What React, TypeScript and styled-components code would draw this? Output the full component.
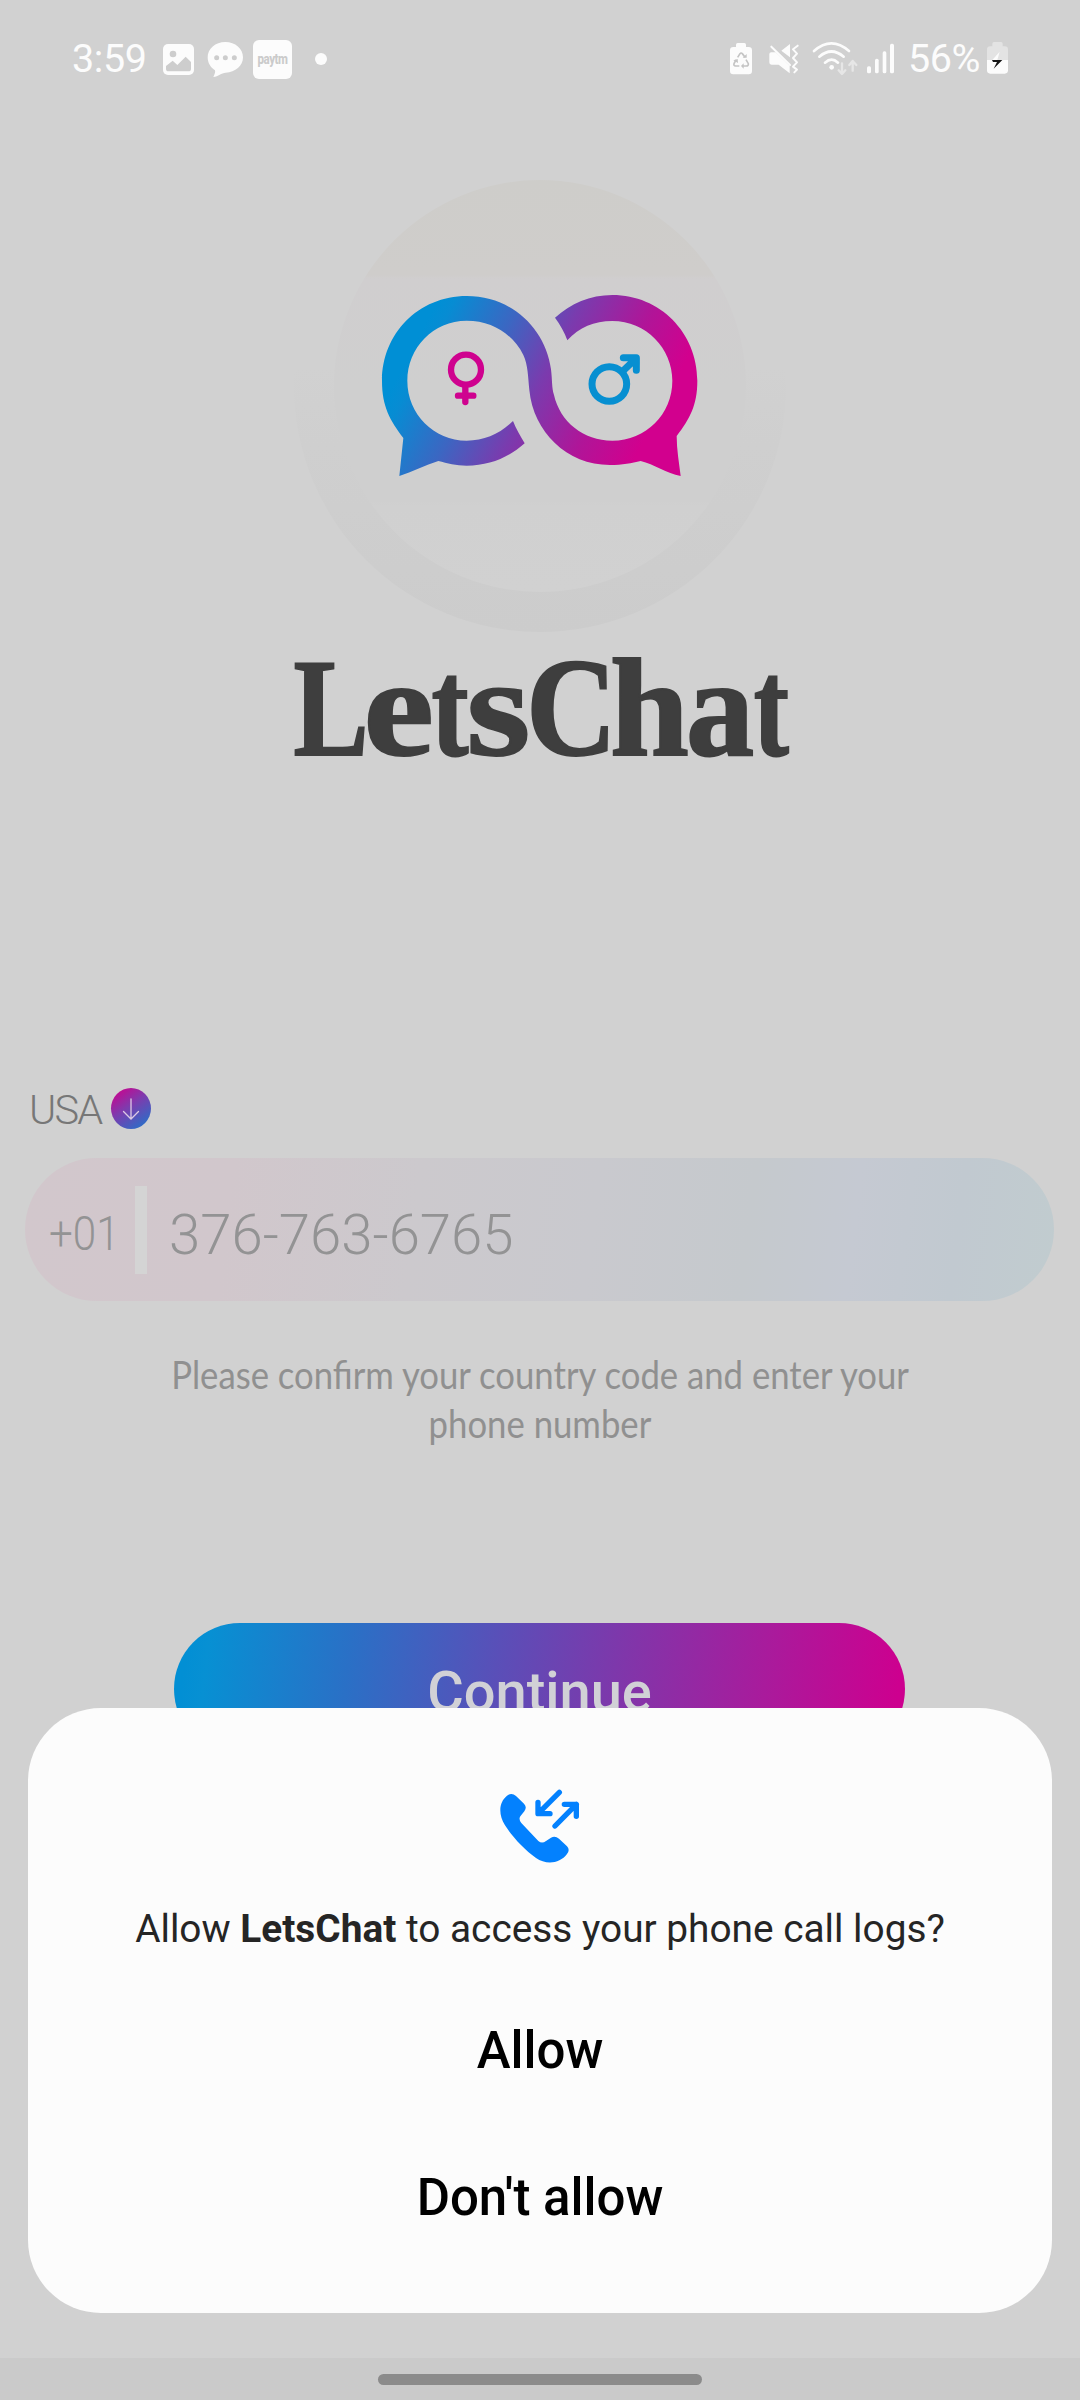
import React from "react";
import styled, { createGlobalStyle } from "styled-components";

const GlobalStyle = createGlobalStyle`
  * { box-sizing: border-box; }
  body { margin: 0; background: #d1d1d1; }
`;

const Screen = styled.div`
  position: relative;
  width: 1080px;
  height: 2400px;
  overflow: hidden;
  background: #d1d1d1;
  font-family: Roboto, "Liberation Sans", sans-serif;
  display: flex;
  flex-direction: column;
`;

const StatusBar = styled.header`
  height: 80px;
  margin-top: 20px;
  padding: 0 72px;
  display: flex;
  justify-content: space-between;
  flex: none;
`;

const StatusGroup = styled.div`
  display: flex;
  align-items: center;
  height: 80px;
`;

const StatusText = styled.span<{ $width: number; $before?: number }>`
  width: ${(p) => p.$width}px;
  margin-left: ${(p) => p.$before ?? 0}px;
  padding-bottom: 3px;
  font-size: 39.5px;
  line-height: 46px;
  letter-spacing: -0.4px;
  white-space: nowrap;
  color: #fcfcfc;
`;

const StatusIcon = styled.svg<{ $before?: number }>`
  height: 80px;
  flex: none;
  margin-left: ${(p) => p.$before ?? 0}px;
`;

const PaytmBadge = styled.span`
  width: 39px;
  height: 39px;
  margin: 0 23px 2px 9px;
  border-radius: 6px;
  background: #fcfcfc;
  color: #cbcbcb;
  display: flex;
  align-items: center;
  justify-content: center;
  font-size: 11.5px;
  font-weight: 800;
  letter-spacing: -0.5px;
`;

const PaytmLabel = styled.span`
  transform: scaleY(1.2);
`;

const Dot = styled.span`
  width: 12px;
  height: 12px;
  margin-bottom: 2px;
  border-radius: 50%;
  background: #fcfcfc;
`;

const Brand = styled.section`
  display: flex;
  flex-direction: column;
  align-items: center;
  height: 970px;
  padding-top: 40px;
`;

const Halo = styled.div`
  width: 492px;
  height: 492px;
  border-radius: 50%;
  background: linear-gradient(#d1d1d1 46%, #cfcfcf 62%, #cccccc);
  display: flex;
  align-items: center;
  justify-content: center;
`;

const Disc = styled.div`
  width: 412px;
  height: 412px;
  border-radius: 50%;
  background: linear-gradient(#cecdca 0, #cfcdcb 23%, #d0cecf 24%, #cfcfcf 50%, #cfcfcf 78%, #d0d0d0 79%, #d1d1d1);
  display: flex;
  justify-content: center;
  padding-top: 100px;
`;

const Wordmark = styled.h1`
  margin: 6px 0 0 4px;
  display: flex;
  width: 493px;
  height: 140px;
  font-family: "Liberation Serif", serif;
  font-size: 139px;
  font-weight: 700;
  line-height: 140px;
  color: #3e3e3e;
  -webkit-text-stroke: 2px #3e3e3e;
`;

const Glyph = styled.span<{ $slot: number; $stretch: number }>`
  flex: none;
  width: ${(p) => p.$slot}px;
  text-indent: -3px;
  transform: scaleX(${(p) => p.$stretch});
  transform-origin: left;
`;

const Form = styled.main`
  display: flex;
  flex-direction: column;
  padding: 0 26px 0 25px;
`;

const CountryRow = styled.div`
  height: 88px;
  padding: 15px 0 0 4px;
  display: flex;
  align-items: flex-start;
`;

const Country = styled.span`
  width: 82px;
  padding-top: 1px;
  font-size: 41.5px;
  font-weight: 300;
  line-height: 48px;
  letter-spacing: -1.8px;
  color: #777777;
`;

const CountryToggle = styled.span`
  width: 40px;
  height: 41px;
  margin-top: 3px;
  border-radius: 50%;
  background: linear-gradient(145deg, #c8058f 8%, #7d3cae 45%, #2074cb 95%);
  display: flex;
  justify-content: center;
  align-items: center;
`;

const PhoneField = styled.div`
  height: 143px;
  border-radius: 72px;
  background: linear-gradient(97deg, #d2c7cc 0, #d1c7cc 20%, #ccc9cd 38%, #c9c9ce 55%, #c5c9cd 70%, #c5c9d2 80%, #c1c9d0 90%, #c1cccf);
  display: flex;
  align-items: center;
  padding-left: 24px;
  color: #939394;
`;

const DialCode = styled.span`
  width: 86px;
  font-size: 49px;
  font-weight: 300;
  padding-top: 8px;
  transform: scaleX(0.86);
  transform-origin: left;
`;

const Divider = styled.span`
  width: 12px;
  height: 88px;
  background: #d4d4d4;
`;

const Phone = styled.span`
  margin-left: 22px;
  padding-top: 10px;
  font-size: 56.3px;
  font-weight: 300;
`;

const Hint = styled.p`
  margin: 49px 0 0 1px;
  display: flex;
  flex-direction: column;
  align-items: center;
  font-family: Lato, "Open Sans", sans-serif;
  font-size: 38px;
  line-height: 49px;
  color: #909090;
  white-space: nowrap;
`;

const HintLine = styled.span`
  transform: scaleX(0.913);
`;

const ContinueButton = styled.button`
  width: 731px;
  height: 132px;
  margin: 175px 0 0 149px;
  border: 0;
  border-radius: 66px;
  background: linear-gradient(97deg, #028fd4 2%, #0790d3 5%, #2a70c6 24%, #5a4fb8 44%, #8036aa 61%, #a91b9c 80%, #cd008f 98%);
  color: #d1d1d6;
  font: 500 56px/64px Roboto, sans-serif;
  padding: 5px 0 0;
`;

const Sheet = styled.section`
  position: absolute;
  left: 28px;
  top: 1708px;
  width: 1024px;
  height: 605px;
  border-radius: 73px;
  background: #fcfcfc;
  display: flex;
  flex-direction: column;
  align-items: center;
  padding-top: 62px;
`;

const Question = styled.p`
  margin: 26px 0 0;
  font-size: 38.8px;
  line-height: 46px;
  color: #252525;
  white-space: nowrap;
`;

const Choice = styled.button<{ $before: number }>`
  margin: ${(p) => p.$before}px 0 0;
  padding: 0;
  border: 0;
  background: none;
  color: #000;
  font: 500 51px/60px Roboto, sans-serif;
`;

const NavBar = styled.footer`
  position: absolute;
  left: 0;
  bottom: 0;
  width: 1080px;
  height: 42px;
  background: #cacaca;
  display: flex;
  justify-content: center;
  padding-top: 16px;
`;

const Handle = styled.span`
  width: 324px;
  height: 11px;
  border-radius: 6px;
  background: #8b8b8b;
`;

const W = "#fcfcfc";

const wordmark = [
  { char: "L", slot: 71, stretch: 0.81 },
  { char: "e", slot: 67, stretch: 1.14 },
  { char: "t", slot: 36, stretch: 0.8 },
  { char: "s", slot: 59, stretch: 1.18 },
  { char: "C", slot: 84, stretch: 0.9 },
  { char: "h", slot: 76, stretch: 1.02 },
  { char: "a", slot: 67, stretch: 0.98 },
  { char: "t", slot: 33, stretch: 0.76 },
];

const Logo = () => (
  <svg width="340" height="210" viewBox="0 0 1020 630">
    <defs>
      <linearGradient id="brand" gradientUnits="userSpaceOnUse" x1="130" y1="200" x2="787" y2="548">
        <stop offset="0" stopColor="#008fd5" />
        <stop offset="0.06" stopColor="#078cd3" />
        <stop offset="0.3" stopColor="#3c66c2" />
        <stop offset="0.52" stopColor="#7a3bae" />
        <stop offset="0.78" stopColor="#b01598" />
        <stop offset="1" stopColor="#d2008e" />
      </linearGradient>
    </defs>
    <path
      fill="url(#brand)"
      d="M464 490C418 531 360 557 290 557C258 557 232 550 205 543C165 556 127 575 88 588L100 474C60 420 36 380 36 302C36 162 145 48 290 48C425 48 526 145 543 268C547 300 545 325 552 345C570 425 640 482 727 482C828 482 907 402 907 302C907 205 828 123 727 123C672 123 628 142 592 181C584 157 570 134 555 113C602 71 660 45 727 45C870 45 982 158 982 302C982 375 960 415 920 468C920 508 927 548 932 588C890 580 852 553 812 543C785 549 758 555 720 555C590 555 490 455 478 330C474 290 474 255 460 225C429 163 367 122 290 122C190 122 112 203 112 302C112 402 192 482 290 482C345 482 391 461 429 423C438 446 451 468 464 490Z"
    />
    <g fill="none" stroke="#cf028f" strokeWidth="19" strokeLinecap="round">
      <circle cx="288" cy="269" r="45" />
      <path d="M286 318V366M264 347H310" />
    </g>
    <g fill="none" stroke="#078fd1" strokeWidth="21" strokeLinecap="round" strokeLinejoin="round">
      <circle cx="718" cy="312" r="52" />
      <path d="M758 274L797 236M760 233H799V271" />
      <path d="M785 237H797V252Z" />
    </g>
  </svg>
);

export default function App() {
  return (
    <Screen>
      <GlobalStyle />
      <StatusBar>
        <StatusGroup>
          <StatusText $width={91}>3:59</StatusText>
          <StatusIcon width="31" viewBox="339 0 93 240">
            <rect x="339" y="72" width="93" height="93" rx="15" fill={W} />
            <circle cx="369" cy="102" r="10" fill="#cdcdcd" />
            <path d="M348 138L368 122L382 135L407 110L423 126V146Q423 154 415 154H356Q348 154 348 146Z" fill="#cdcdcd" />
          </StatusIcon>
          <StatusIcon $before={13} width="37" viewBox="471 0 111 240">
            <path d="M526 66C556 66 579 86 579 112C579 138 556 157 527 158C514 158 505 170 490 171C493 164 497 158 495 151C481 142 473 128 473 112C473 86 496 66 526 66Z" fill={W} />
            <g fill="#cdcdcd">
              <circle cx="500" cy="113" r="7.5" />
              <circle cx="526" cy="113" r="7.5" />
              <circle cx="553" cy="113" r="7.5" />
            </g>
          </StatusIcon>
          <PaytmBadge>
            <PaytmLabel>paytm</PaytmLabel>
          </PaytmBadge>
          <Dot />
        </StatusGroup>
        <StatusGroup>
          <StatusIcon width="22" viewBox="60 0 66 240">
            <path d="M78 81V74Q78 69 83 69H103Q108 69 108 74V81H116Q126 81 126 91V153Q126 163 116 163H70Q60 163 60 153V91Q60 81 70 81Z" fill={W} />
            <g fill="none" stroke="#c4c4c4" strokeWidth="5">
              <path d="M83 112L90 101Q93 97 97 101L105 112M108 119L115 131Q116 138 109 138H99M88 138H77Q70 137 72 131L78 120" />
            </g>
            <path d="M98 113H110V102ZM101 130V146L93 138ZM70 121L83 117L84 129Z" fill="#c4c4c4" />
          </StatusIcon>
          <StatusIcon $before={16} width="32" viewBox="174 0 96 240">
            <path d="M214 92L240 72V112ZM178 102Q178 97 184 97H197L239 138V160L206 134H186Q178 134 178 126Z" fill={W} />
            <path d="M184 80L240 135" stroke={W} strokeWidth="6" strokeLinecap="round" />
            <path d="M263 77L249 88L261 101L249 114L261 127L249 140L261 149L253 157" fill="none" stroke={W} strokeWidth="6" strokeLinecap="round" strokeLinejoin="round" />
          </StatusIcon>
          <StatusIcon $before={12} width="46" viewBox="306 0 138 240">
            <g fill="none" stroke={W} strokeWidth="8" strokeLinecap="round">
              <path d="M312 93Q364 47 417 93M328 110Q364 79 401 110M345 128Q365 110 384 128" />
            </g>
            <circle cx="365" cy="142" r="7" fill={W} />
            <path d="M396 130V160M386 151L396 162L406 151M428 152V124M418 135L428 123L439 135" fill="none" stroke="#e6e6e6" strokeWidth="7" strokeLinecap="round" strokeLinejoin="round" />
          </StatusIcon>
          <StatusIcon $before={9} width="27" viewBox="471 0 81 240">
            <g fill={W}>
              <rect x="471" y="139" width="12" height="21" rx="5" />
              <rect x="495" y="116" width="11" height="44" rx="5" />
              <rect x="518" y="94" width="11" height="66" rx="5" />
              <rect x="540" y="71" width="12" height="89" rx="5" />
            </g>
          </StatusIcon>
          <StatusText $before={14} $width={79}>56%</StatusText>
          <StatusIcon width="21" viewBox="831 0 63 240">
            <path d="M847 79V71Q847 66 852 66H873Q878 66 878 71V79H884Q894 79 894 89V121H831V89Q831 79 841 79Z" fill="#e3e3e3" />
            <path d="M831 120H894V151Q894 161 884 161H841Q831 161 831 151Z" fill={W} />
            <path d="M869 95L847 120H862Z" fill={W} />
            <path d="M846 120H877L851 146L861 126H849Z" fill="#151515" />
          </StatusIcon>
        </StatusGroup>
      </StatusBar>

      <Brand>
        <Halo>
          <Disc>
            <Logo />
          </Disc>
        </Halo>
        <Wordmark>
          {wordmark.map((g, i) => (
            <Glyph key={i} $slot={g.slot} $stretch={g.stretch}>
              {g.char}
            </Glyph>
          ))}
        </Wordmark>
      </Brand>

      <Form>
        <CountryRow>
          <Country>USA</Country>
          <CountryToggle>
            <svg width="18" height="24" viewBox="0 0 18 24" fill="none" stroke="#dcc9e4" strokeWidth="1.3" strokeLinecap="round">
              <path d="M9 2V22M1.5 14.5L9 22L16.5 14.5" />
            </svg>
          </CountryToggle>
        </CountryRow>
        <PhoneField>
          <DialCode>+01</DialCode>
          <Divider />
          <Phone>376-763-6765</Phone>
        </PhoneField>
        <Hint>
          <HintLine>Please confirm your country code and enter your</HintLine>
          <HintLine>phone number</HintLine>
        </Hint>
        <ContinueButton>Continue</ContinueButton>
      </Form>

      <Sheet>
        <svg width="140" height="110" viewBox="0 0 420 330">
          <path
            d="M111 77Q125 67 138 78L162 101Q172 112 163 124L151 139Q145 148 154 159L205 213Q216 222 228 213L243 203Q255 196 267 206L291 229Q301 240 291 252C270 281 228 285 198 264C163 238 129 203 105 166C84 132 87 96 111 77Z"
            fill="#0381fe"
          />
          <g fill="none" stroke="#0381fe" strokeWidth="16" strokeLinecap="round" strokeLinejoin="round">
            <path d="M268 67L205 130M204 97V131H240M255 168L319 103M283 103H319V139" />
          </g>
        </svg>
        <Question>
          Allow <b>LetsChat</b> to access your phone call logs?
        </Question>
        <Choice $before={69}>Allow</Choice>
        <Choice $before={87}>Don't allow</Choice>
      </Sheet>
      <NavBar>
        <Handle />
      </NavBar>
    </Screen>
  );
}
